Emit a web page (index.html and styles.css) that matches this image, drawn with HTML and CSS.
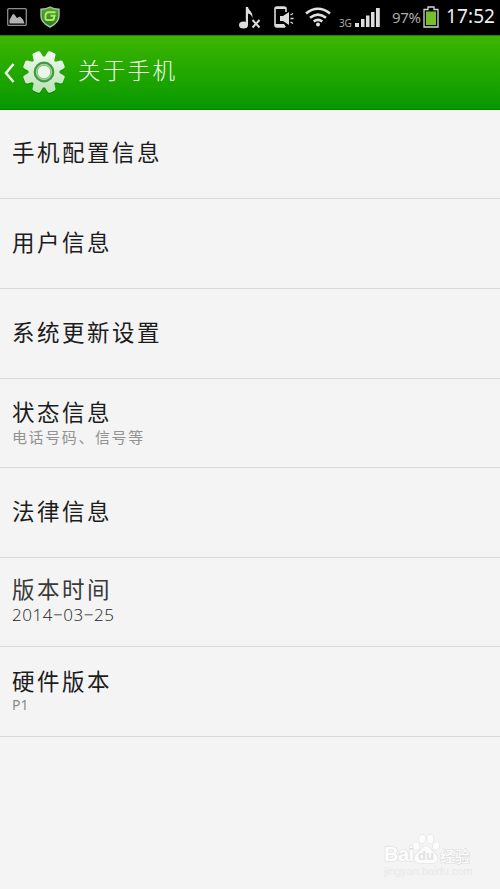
FILE: index.html
```html
<!DOCTYPE html>
<html lang="zh-CN">
<head>
<meta charset="utf-8">
<title>关于手机</title>
<link rel="stylesheet" href="styles.css">
</head>
<body>
<div class="status">
  <svg class="picture" width="20" height="18" viewBox="0 0 20 18"><rect x=".7" y=".7" width="18.6" height="16.6" rx="1" fill="none" stroke="#8e8e8e" stroke-width="1.3"/><path d="M2.500 15.500V12L5.500 6.500l1.500-.5 3 4 3-1.500 3 3 1.500 4z" fill="#b4b4b4"/></svg>
  <svg class="shield" width="20" height="22" viewBox="0 0 20 22"><defs><linearGradient id="sg" x2="0" y2="1"><stop stop-color="#59a83e"/><stop offset="1" stop-color="#237b1b"/></linearGradient></defs><path d="M10 1Q14 3.300 19 3.200V10c0 6-4 8.600-9 11C5 18.600 1 16 1 10V3.200Q6 3.300 10 1z" fill="url(#sg)" stroke="#a8c9a3" stroke-width="1.400"/><path d="M15.500 6.300H8.500Q6 6.300 5.600 9l-.2 3q0 2 1.600 2h5q1.700 0 2-2l.5-2.200h-4" fill="none" stroke="#b5e85e" stroke-width="2"/></svg>
  <svg class="note" width="22" height="22" viewBox="0 0 22 22" fill="#ddd"><ellipse cx="4.500" cy="18" rx="4.500" ry="3.500"/><path d="M6.800 0H9c.5 3.500 5.500 5 4.300 11-.7-3-2.200-4-4.300-4.500V18H6.800z"/><path d="M13.500 13l7 7.500m0-7.500l-7 7.500" stroke="#ddd" stroke-width="2"/></svg>
  <svg class="mute" width="21" height="22" viewBox="0 0 21 22"><path d="M12 6V3q0-2-2-2H3Q1 1 1 3v16q0 2 2 2h8" fill="none" stroke="#ddd" stroke-width="1.600"/><path d="M1 1h11v2H1zM1 18h9l2 3H2z" fill="#ddd"/><path d="M6 10h3l6-4v13l-6-4H6z" fill="#ddd"/><path d="M16.500 9l2.500-1.500m-2.500 5h3m-3 3.500l2.500 1.500" stroke="#ddd" stroke-width="1.300"/></svg>
  <svg class="wifi" width="26" height="20" viewBox="0 0 26 20" fill="none" stroke="#e2e2e2" stroke-width="2.600"><path d="M1 6.500Q13-3 25 6.500M5 10.800q8-6.400 16 0M8.700 14.600q4.300-3.500 8.600 0"/><circle cx="13" cy="17.600" r="2" fill="#e2e2e2" stroke="none"/></svg>
  <span class="net">3G</span>
  <svg class="signal" width="25" height="19" viewBox="0 0 25 19" fill="#ddd"><path d="M0 15h4v4H0zM6 11h3.500v8H6zM11 7.500h3.500V19H11zM16 4h3.500v15H16zM21 0h3.800v19H21z"/></svg>
  <span class="percent">97%</span>
  <svg class="battery" width="16" height="22" viewBox="0 0 16 22"><path d="M5 1h6v2.500h4V21H1V3.500h4z" fill="#050505" stroke="#d4d8cf" stroke-width="1.300"/><path d="M3 5.500h10V19H3z" fill="#78bd2b"/></svg>
  <span class="clock">17:52</span>
</div>
<header class="header">
  <svg class="back" width="11" height="20" viewBox="0 0 11 20"><path d="M9.500 1L2 10l7.500 9" fill="none" stroke="#f1f9ed" stroke-width="2.500"/></svg>
  <svg class="gear" width="44" height="46" viewBox="-22 -22 44 46">
    <defs>
      <linearGradient id="gg" gradientUnits="userSpaceOnUse" x1="0" y1="-21" x2="0" y2="21"><stop stop-color="#f3faf0"/><stop offset="1" stop-color="#b9e2b5"/></linearGradient>
      <path id="tooth" d="M-5.300-13L-4.300-19.700Q-4-21.300-2.500-21.300H2.500Q4-21.300 4.300-19.700L5.300-13z"/>
      <clipPath id="cogShape"><circle r="15.500"/><use href="#tooth" transform="rotate(22.500)"/><use href="#tooth" transform="rotate(67.500)"/><use href="#tooth" transform="rotate(112.500)"/><use href="#tooth" transform="rotate(157.500)"/><use href="#tooth" transform="rotate(202.500)"/><use href="#tooth" transform="rotate(247.500)"/><use href="#tooth" transform="rotate(292.500)"/><use href="#tooth" transform="rotate(337.500)"/></clipPath>
    </defs>
    <g transform="translate(0 1.300)"><rect x="-22" y="-22" width="44" height="44" fill="#087b05" opacity=".55" clip-path="url(#cogShape)"/></g>
    <rect x="-22" y="-22" width="44" height="44" fill="url(#gg)" clip-path="url(#cogShape)"/>
    <circle r="9.300" fill="#a7d3a1" stroke="#409b3b" stroke-width="2.200"/><circle r="6.700" fill="#eaf6e7" stroke="#75b470" stroke-width=".8"/>
  </svg>
  <h1>关于手机</h1>
</header>
<main class="list">
  <div class="row"><h2>手机配置信息</h2></div>
  <div class="row"><h2>用户信息</h2></div>
  <div class="row"><h2>系统更新设置</h2></div>
  <div class="row detail"><h2>状态信息</h2><p class="cjk">电话号码、信号等</p></div>
  <div class="row"><h2>法律信息</h2></div>
  <div class="row detail build"><h2>版本时间</h2><p>2014−03−25</p></div>
  <div class="row detail hardware"><h2>硬件版本</h2><p>P1</p></div>
</main>
<div class="watermark">
  <div class="brand"><span class="bai">Bai</span><svg width="28" height="30" viewBox="0 0 26 30" preserveAspectRatio="none"><g fill="#fcfcfc" stroke="#dedede"><ellipse cx="4" cy="12" rx="3" ry="4" transform="rotate(-15 4 12)"/><ellipse cx="9.500" cy="5" rx="3" ry="4.300"/><ellipse cx="17" cy="5" rx="3" ry="4.300"/><ellipse cx="22.500" cy="12" rx="3" ry="4" transform="rotate(15 22.500 12)"/><path d="M13 12c4 0 4 4 8 7 5 4 3 10-2 10H7c-5 0-7-6-2-10 4-3 4-7 8-7z"/></g><text x="13" y="26" text-anchor="middle" class="du">du</text></svg><span class="experience">经验</span></div>
  <div class="site">jingyan.baidu.com</div>
</div>
</body>
</html>
```
FILE: styles.css
```css
* { box-sizing: border-box; }
body {
  margin: 0;
  height: 889px;
  overflow: hidden;
  background: #f4f4f4;
  font-family: "Noto Sans", "Noto Sans CJK SC", sans-serif;
  position: relative;
}
svg { display: block; flex: none; }
h1, h2, p { margin: 0; font-weight: 400; white-space: nowrap; }
.status {
  height: 35px;
  display: flex;
  align-items: center;
  padding: 0 0 1px 7px;
  background: #000;
  color: #ddd;
  white-space: nowrap;
}
.shield { margin-left: 13px; }
.note { margin: 2px 0 0 179px; }
.mute { margin-left: 13px; }
.wifi { margin-left: 10px; }
.net { width: 14px; margin: 12px 0 0 8px; font: 10px/12px "Noto Sans", sans-serif; letter-spacing: -.3px; color: #aaa; }
.signal { margin-left: 2px; }
.percent { width: 31px; margin: -1px 0 0 12px; font-size: 15px; line-height: 20px; letter-spacing: -.3px; color: #aaa; }
.clock { margin: -2px 0 0 7px; font-size: 19px; line-height: 24px; letter-spacing: .1px; color: #eee; }
.header {
  height: 75px;
  display: flex;
  align-items: center;
  padding-left: 4px;
  background: linear-gradient(#3db500, #129f00 80%, #079600);
  border-top: 1px solid #278000;
  border-bottom: 1px solid #068400;
}
.gear { margin: 1px 0 0 7px; }
h1 {
  margin: -7px 0 0 12px;
  font: 300 22.500px/30px "Noto Sans CJK SC", sans-serif;
  letter-spacing: 2.300px;
  color: #f0fbec;
}
.list { display: grid; grid-template-rows: 89px 90px 90px 89px 90px 89px 90px; }
.row {
  display: flex;
  flex-direction: column;
  justify-content: center;
  padding: 0 0 6px 12px;
  border-bottom: 1px solid #d9d9d9;
}
h2 {
  font: 400 22.500px/30px "Noto Sans CJK SC", sans-serif;
  letter-spacing: 2.500px;
  color: #1c1c1c;
}
.detail { justify-content: flex-start; padding-top: 17px; }
p { font-size: 14px; line-height: 20px; color: #8a8a8a; }
.cjk { margin-top: 1px; font-family: "Noto Sans CJK SC", sans-serif; font-size: 15px; letter-spacing: 1.600px; color: #929292; }
.build { padding-top: 15px; }
.build h2 { color: #393939; }
.build p { margin-top: 2px; font: 300 17px/20px "Open Sans", sans-serif; letter-spacing: .550px; color: #222; }
.hardware { padding-top: 18px; }
.watermark { position: absolute; left: 384px; top: 834px; width: 90px; }
.brand { display: flex; align-items: flex-end; height: 30px; color: #fcfcfc; font: 700 20px/20px "Liberation Sans", sans-serif; -webkit-text-stroke: 1.200px #dcdcdc; paint-order: stroke fill; }
.bai { width: 28px; letter-spacing: -.5px; }
.brand .experience { font: 500 15px/17px "Noto Sans CJK SC", sans-serif; }
.du { font: 700 12px "Liberation Sans", sans-serif; fill: #e1e1e1; stroke: none; -webkit-text-stroke: 0; }
.site { font: 11px/14px "Liberation Sans", sans-serif; color: #e8e8e8; }
```
